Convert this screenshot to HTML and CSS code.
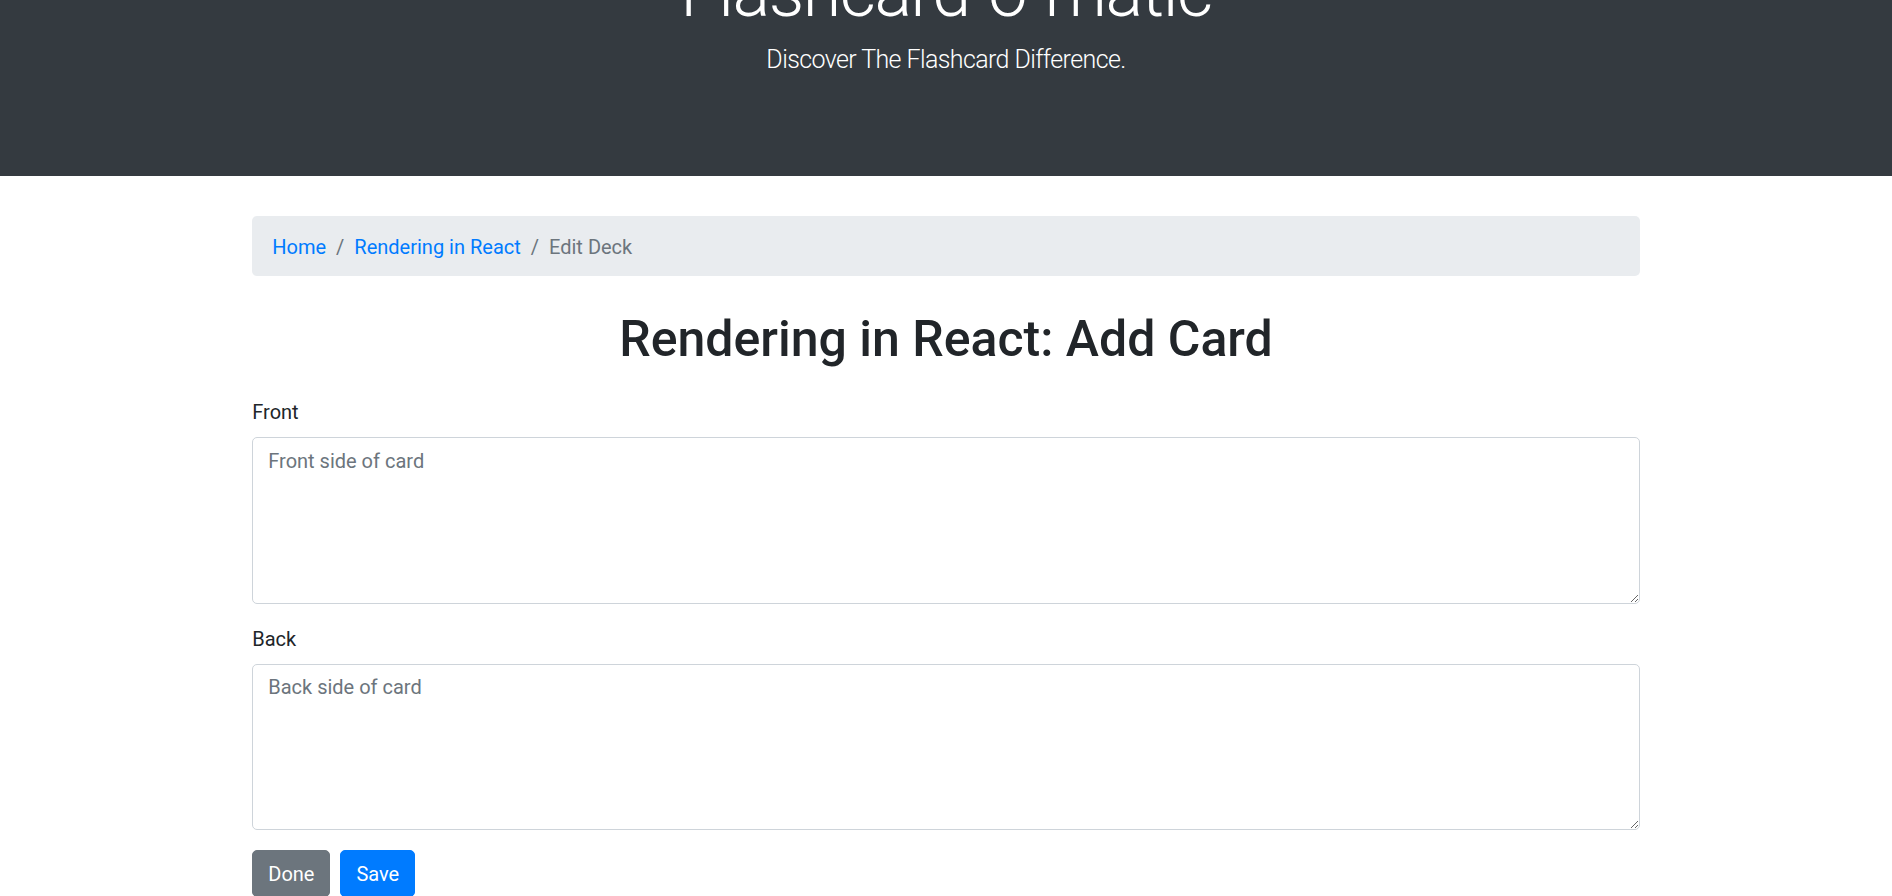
FILE: index.html
```html
<!DOCTYPE html>
<html lang="en">
<head>
<meta charset="utf-8">
<title>Flashcard-o-matic</title>
<link rel="stylesheet" href="styles.css">
</head>
<body>
<header class="jumbotron">
  <div class="container">
    <h1 class="display">Flashcard-o-matic</h1>
    <p class="lead">Discover The Flashcard Difference.</p>
  </div>
</header>
<main class="container">
  <nav aria-label="breadcrumb">
    <ol class="breadcrumb">
      <li class="crumb"><a href="#">Home</a></li>
      <li class="crumb"><a href="#">Rendering in React</a></li>
      <li class="crumb active">Edit Deck</li>
    </ol>
  </nav>
  <h1 class="title">Rendering in React: Add Card</h1>
  <form class="card-form">
    <div class="form-group">
      <label class="label" for="front">Front</label>
      <textarea class="control" id="front" placeholder="Front side of card"></textarea>
    </div>
    <div class="form-group">
      <label class="label" for="back">Back</label>
      <textarea class="control" id="back" placeholder="Back side of card"></textarea>
    </div>
    <div class="actions">
      <button type="button" class="btn btn-secondary">Done</button>
      <button type="submit" class="btn btn-primary">Save</button>
    </div>
  </form>
</main>
</body>
</html>
```
FILE: styles.css
```css
* { box-sizing: border-box; }

body {
  margin: 0;
  font-family: Roboto, "Liberation Sans", sans-serif;
  font-size: 20px;
  line-height: 30px;
  color: #212529;
  background: #fff;
}

.container {
  max-width: 1425px;
  margin: 0 auto;
  padding: 0 18.75px;
}

.jumbotron {
  background: #343a40;
  color: #fff;
  text-align: center;
  margin-top: -130px;
  padding: 80px 0;
  margin-bottom: 40px;
}

.display {
  font-size: 70px;
  font-weight: 300;
  line-height: 84px;
  letter-spacing: -1.4px;
  margin: 0 0 7px;
}

.lead {
  font-size: 25px;
  font-weight: 300;
  line-height: 37.5px;
  letter-spacing: -0.6px;
  margin: 0 0 17.5px;
}

.breadcrumb {
  display: flex;
  flex-wrap: wrap;
  list-style: none;
  margin: 0 0 33px;
  padding: 16px 20px 14px;
  background: #e9ecef;
  border-radius: 5px;
}

.crumb + .crumb {
  padding-left: 10px;
}

.crumb + .crumb::before {
  content: "/";
  padding-right: 10px;
  color: #6c757d;
}

.crumb a {
  color: #007bff;
  text-decoration: none;
}

.crumb.active {
  color: #6c757d;
}

.title {
  text-align: center;
  font-size: 50px;
  font-weight: 500;
  line-height: 60px;
  margin: 0 0 28px;
}

.form-group {
  margin-bottom: 20px;
}

.label {
  display: inline-block;
  margin-bottom: 10px;
}

.control {
  display: block;
  width: 100%;
  height: 166.5px;
  padding: 7.5px 15px;
  font-family: inherit;
  font-size: 20px;
  line-height: 30px;
  color: #495057;
  background: #fff;
  border: 1px solid #ced4da;
  border-radius: 5px;
  resize: vertical;
  margin: 0;
}

.control::placeholder {
  color: #6c757d;
  opacity: 1;
}

.actions {
  display: flex;
  gap: 10px;
}

.btn {
  display: inline-block;
  font-family: inherit;
  font-size: 20px;
  line-height: 30px;
  padding: 7.5px 15px;
  border: 1px solid transparent;
  border-radius: 5px;
  color: #fff;
  cursor: pointer;
}

.btn-secondary {
  background: #6c757d;
  border-color: #6c757d;
}

.btn-primary {
  background: #007bff;
  border-color: #007bff;
}
```
